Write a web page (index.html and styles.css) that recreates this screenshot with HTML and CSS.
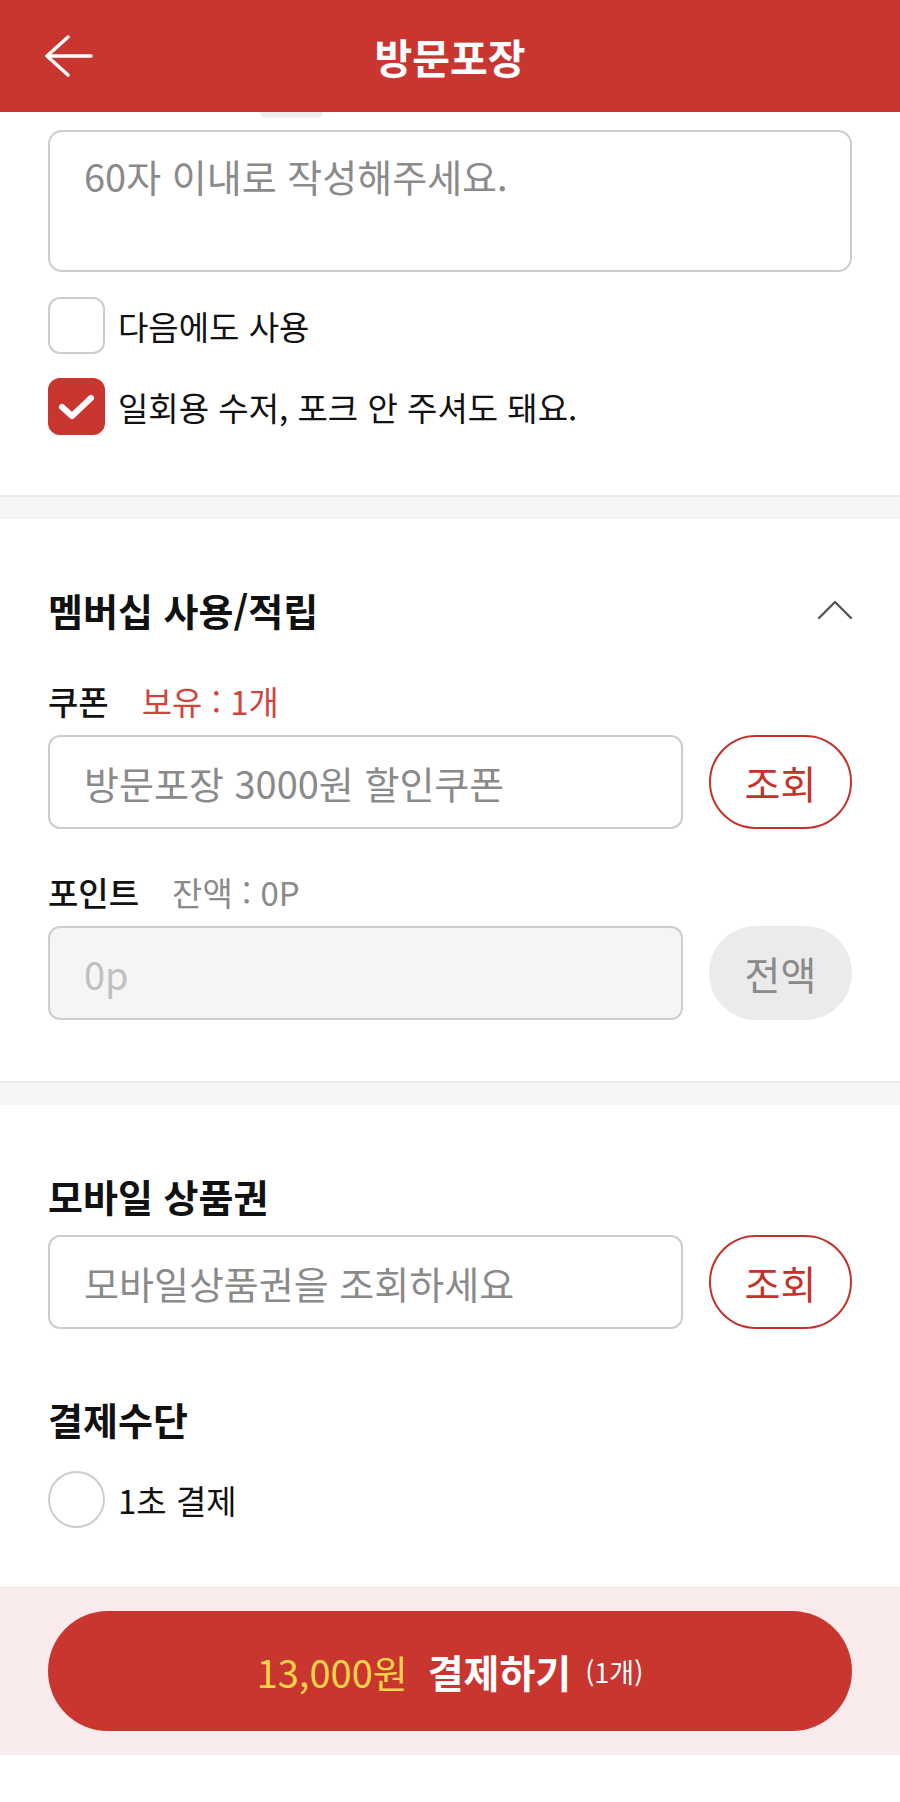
FILE: index.html
```html
<!DOCTYPE html>
<html lang="ko">
<head>
<meta charset="utf-8">
<title>방문포장</title>
<link rel="stylesheet" href="styles.css">
</head>
<body>
<header class="topbar">
  <button class="back" aria-label="뒤로">
    <svg width="50" height="42" viewBox="0 0 50 42"><path d="M3 21H47M24 2L3 21L24 40" fill="none" stroke="#fff" stroke-width="3.5" stroke-linecap="round" stroke-linejoin="round"/></svg>
  </button>
  <h1 class="title">방문포장</h1>
  <span></span>
</header>

<section class="sec sec-request">
  <div class="peek"></div>
  <textarea class="memo" placeholder="60자 이내로 작성해주세요."></textarea>
  <label class="check-row">
    <span class="box"></span>
    <span class="check-label">다음에도 사용</span>
  </label>
  <label class="check-row">
    <span class="box checked">
      <svg width="57" height="57" viewBox="0 0 57 57"><path d="M14 29L24 38L43 20" fill="none" stroke="#fff" stroke-width="6" stroke-linecap="round" stroke-linejoin="round"/></svg>
    </span>
    <span class="check-label">일회용 수저, 포크 안 주셔도 돼요.</span>
  </label>
</section>

<div class="band"></div>

<section class="sec sec-member">
  <div class="sec-head">
    <h2 class="sec-title">멤버십 사용/적립</h2>
    <svg class="chev" width="36" height="20" viewBox="0 0 36 20"><path d="M2 18L18 2L34 18" fill="none" stroke="#555" stroke-width="2.4" stroke-linecap="round" stroke-linejoin="round"/></svg>
  </div>
  <div class="sub-row">
    <span class="sub-label">쿠폰</span>
    <span class="sub-info red">보유 : 1개</span>
  </div>
  <div class="field-row">
    <input class="field" type="text" placeholder="방문포장 3000원 할인쿠폰">
    <button class="pill outline">조회</button>
  </div>
  <div class="sub-row">
    <span class="sub-label">포인트</span>
    <span class="sub-info">잔액 : 0P</span>
  </div>
  <div class="field-row">
    <input class="field disabled" type="text" placeholder="0p" disabled>
    <button class="pill grey">전액</button>
  </div>
</section>

<div class="band"></div>

<section class="sec sec-pay">
  <h2 class="sec-title">모바일 상품권</h2>
  <div class="field-row gift">
    <input class="field" type="text" placeholder="모바일상품권을 조회하세요">
    <button class="pill outline">조회</button>
  </div>
  <h2 class="sec-title method">결제수단</h2>
  <label class="check-row radio-row">
    <span class="radio"></span>
    <span class="check-label">1초 결제</span>
  </label>
</section>

<footer class="paybar">
  <button class="paybtn">
    <span class="price">13,000원</span>
    <span class="paytxt">결제하기</span>
    <span class="count">(1개)</span>
  </button>
</footer>
</body>
</html>
```

FILE: styles.css
```css
* { box-sizing: border-box; }

html, body {
  margin: 0;
  padding: 0;
  background: #fff;
}

body {
  width: 900px;
  font-family: "Noto Sans CJK KR", "Noto Sans", sans-serif;
  color: #111;
}

button, input, textarea {
  font-family: "Noto Sans CJK KR", "Noto Sans", sans-serif;
}

/* header */
.topbar {
  height: 112px;
  background: #c9352f;
  display: grid;
  grid-template-columns: 1fr auto 1fr;
  align-items: center;
  padding: 0 44px;
}

.back {
  background: none;
  border: 0;
  padding: 0;
  width: 50px;
  height: 42px;
  display: flex;
}

.title {
  margin: 0;
  color: #fff;
  font-size: 41px;
  font-weight: 700;
  line-height: 50px;
}

/* sections */
.sec {
  padding: 0 48px;
}

.sec-request {
  padding-bottom: 60px;
}

.peek {
  width: 63px;
  height: 6px;
  margin-left: 212px;
  background: #ededed;
  border-radius: 0 0 14px 14px;
}

.memo {
  display: block;
  width: 100%;
  height: 142px;
  margin-top: 12px;
  border: 2px solid #cdcdcd;
  border-radius: 14px;
  padding: 19px 34px;
  font-size: 38px;
  line-height: 50px;
  color: #333;
  resize: none;
  outline: none;
}

.memo::placeholder { color: #8a8a8a; }

.check-row {
  display: flex;
  align-items: center;
  gap: 13px;
  margin-top: 25px;
}

.check-row + .check-row { margin-top: 24px; }

.box {
  width: 57px;
  height: 57px;
  border: 2px solid #cdcdcd;
  border-radius: 12px;
  flex: none;
  display: flex;
}

.box.checked {
  background: #c9352f;
  border-color: #c9352f;
  align-items: center;
  justify-content: center;
}

.box.checked svg { margin: -2px; }

.check-label {
  font-size: 33px;
  line-height: 50px;
  color: #111;
}

.band {
  height: 24px;
  background: #f5f5f5;
  border-top: 2px solid #eaeaea;
}

.sec-member {
  padding-top: 66px;
  padding-bottom: 61px;
}

.sec-head {
  display: flex;
  align-items: center;
  justify-content: space-between;
}

.chev { margin-right: -1px; }

.sec-title {
  margin: 0;
  font-size: 38px;
  font-weight: 700;
  line-height: 50px;
  color: #111;
}

.sub-row {
  display: flex;
  align-items: center;
  margin-top: 46px;
  line-height: 40px;
}

.sub-row + .field-row { margin-top: 14px; }

.field-row + .sub-row { margin-top: 43px; }

.sub-label {
  font-size: 33px;
  font-weight: 500;
  color: #111;
}

.sub-info {
  font-size: 33px;
  margin-left: 33px;
  color: #8a8a8a;
}

.sub-info.red { color: #d0453b; }

.field-row {
  display: flex;
  gap: 26px;
}

.field {
  flex: 1;
  min-width: 0;
  height: 94px;
  border: 2px solid #cdcdcd;
  border-radius: 12px;
  padding: 0 34px;
  font-size: 38px;
  color: #333;
  background: #fff;
  outline: none;
}

.field::placeholder { color: #8a8a8a; }

.field.disabled {
  background: #f5f5f5;
}

.field.disabled::placeholder { color: #c0c0c0; }

.pill {
  width: 143px;
  height: 94px;
  flex: none;
  border-radius: 47px;
  font-size: 39px;
  padding: 0;
}

.pill.outline {
  background: #fff;
  border: 2.5px solid #c2332c;
  color: #c2332c;
}

.pill.grey {
  background: #ebebeb;
  border: 0;
  color: #8a8a8a;
}

.sec-pay {
  padding-top: 66px;
  padding-bottom: 59px;
}

.field-row.gift { margin-top: 14px; }

.sec-title.method { margin-top: 65px; }

.radio-row { margin-top: 27px; }

.radio {
  width: 57px;
  height: 57px;
  border: 2px solid #cdcdcd;
  border-radius: 50%;
  flex: none;
}

/* bottom pay bar */
.paybar {
  background: #f9ebeb;
  border-top: 1px solid #efe4e4;
  padding: 23px 48px 24px;
  margin-bottom: 45px;
}

.paybtn {
  width: 100%;
  height: 120px;
  border: 0;
  border-radius: 60px;
  background: #c9352f;
  display: flex;
  align-items: center;
  justify-content: center;
  padding: 0;
}

.price {
  font-size: 38px;
  color: #fcd448;
}

.paytxt {
  font-size: 39px;
  font-weight: 700;
  color: #fff;
  margin-left: 20px;
}

.count {
  font-size: 27px;
  color: #fff;
  margin-left: 14px;
}
```
